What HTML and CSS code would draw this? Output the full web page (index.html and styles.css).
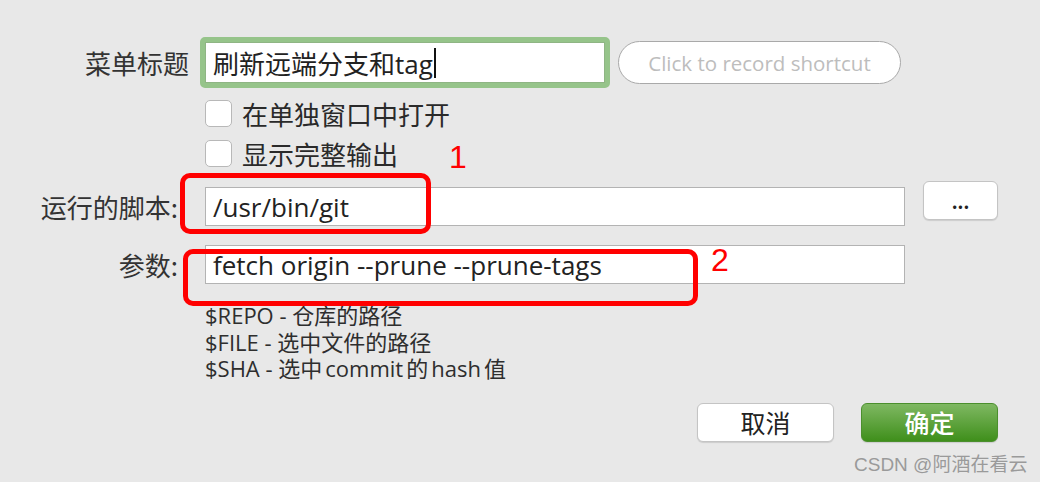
FILE: index.html
```html
<!DOCTYPE html>
<html lang="zh-CN">
<head>
  <meta charset="UTF-8">
  <title>自定义操作</title>
  <link rel="stylesheet" href="styles.css">
</head>
<body>
  <div class="sheet">
    <div class="row title-row">
      <label class="lbl">菜单标题</label>
      <div class="focus-ring"><div class="field title-field">刷新远端分支和tag<span class="caret"></span></div></div>
      <div class="shortcut">Click to record shortcut</div>
    </div>

    <div class="row check-row first">
      <span class="box"></span><span class="check-text">在单独窗口中打开</span>
    </div>
    <div class="row check-row">
      <span class="box"></span><span class="check-text">显示完整输出</span>
    </div>

    <div class="row field-row script-row">
      <label class="lbl colon">运行的脚本:</label>
      <div class="field wide">/usr/bin/git</div>
      <button class="btn browse">...</button>
    </div>

    <div class="row field-row args-row">
      <label class="lbl colon">参数:</label>
      <div class="field wide">fetch origin --prune --prune-tags</div>
    </div>

    <div class="help">
      <div>$REPO - 仓库的路径</div>
      <div>$FILE - 选中文件的路径</div>
      <div>$SHA - 选中<span class="gap">commit</span>的<span class="gap">hash</span>值</div>
    </div>

    <div class="actions">
      <button class="btn cancel">取消</button>
      <button class="btn ok">确定</button>
    </div>

    <div class="mark mark-1"></div>
    <div class="mark mark-2"></div>
    <span class="num num-1">1</span>
    <span class="num num-2">2</span>
    <div class="watermark">CSDN @阿酒在看云</div>
  </div>
</body>
</html>
```

FILE: styles.css
```css
body { margin: 0; background: #e8e8e8; font-family: "Open Sans", "Noto Sans CJK SC", sans-serif; color: #222; }
.sheet { position: relative; width: 1040px; height: 482px; padding-top: 37px; box-sizing: border-box; }
.row { display: flex; align-items: center; }
.lbl { width: 190px; text-align: right; font-family: "Noto Sans CJK SC", sans-serif; font-size: 26px; color: #333; flex: none; box-sizing: border-box; padding-right: 1px; }
.lbl.colon { padding-right: 12px; }

.focus-ring { margin-left: 10px; width: 410px; height: 51px; box-sizing: border-box; border: 5px solid #96c48a; border-radius: 5px; background: #fff; }
.title-field { height: 100%; border: 1px solid #8fb584; box-sizing: border-box; font-size: 26px; padding-left: 7px; display: flex; align-items: center; }
.caret { display: inline-block; width: 2px; height: 30px; background: #111; margin-left: 1px; }
.shortcut { margin-left: 8px; width: 283px; height: 43px; box-sizing: border-box; border: 1px solid #a9a9a9; border-radius: 22px; background: #fff; color: #bdbdbd; font-size: 20.5px; display: flex; align-items: center; justify-content: center; }

.check-row { margin-left: 205px; height: 27px; }
.check-row.first { margin-top: 12px; }
.check-row + .check-row { margin-top: 13px; }
.box { width: 27px; height: 27px; box-sizing: border-box; border: 1px solid #b8b8b8; border-radius: 5px; background: #fff; }
.check-text { margin-left: 10px; font-family: "Noto Sans CJK SC", sans-serif; font-size: 26px; color: #2a2a2a; }

.field-row { height: 39px; align-items: center; }
.script-row { margin-top: 20px; }
.args-row { margin-top: 19px; }
.field { background: #fff; color: #222; }
.wide { margin-left: 15px; width: 700px; height: 39px; box-sizing: border-box; border: 1px solid #b3b3b3; font-size: 26px; padding-left: 7px; display: flex; align-items: center; }

.btn { font-family: "Noto Sans CJK SC", sans-serif; background: #fff; border: 1px solid #c4c4c4; border-radius: 6px; box-shadow: 0 1px 1px rgba(0,0,0,0.12); color: #222; padding: 0; }
.browse { margin-left: 18px; align-self: flex-start; margin-top: -6px; width: 75px; height: 39px; font-size: 18px; font-weight: bold; line-height: 1; }

.help { margin: 18px 0 0 205px; font-size: 22px; line-height: 26.5px; color: #2e2e2e; }
.gap { margin: 0 3px; }

.actions { display: flex; justify-content: flex-end; gap: 27px; margin: 21px 42px 0 0; }
.actions .btn { width: 137px; height: 39px; font-size: 25px; }
.ok { background: linear-gradient(#7fb862, #3f8f1b); border-color: #4b8f2d; color: #fff; font-weight: 500; }

.mark { position: absolute; border: 5px solid #ff0000; border-radius: 10px; box-sizing: border-box; }
.mark-1 { left: 180px; top: 173px; width: 251px; height: 61px; }
.mark-2 { left: 183px; top: 249px; width: 515px; height: 57px; }
.num { position: absolute; color: #ff0000; font-family: "Liberation Sans", sans-serif; font-size: 32px; line-height: 1; }
.num-1 { left: 449px; top: 141px; }
.num-2 { left: 711px; top: 244px; }

.watermark { position: absolute; left: 854px; top: 449px; font-size: 19px; color: #9a9a9a; font-family: "Liberation Sans", "Noto Sans CJK SC", sans-serif; }
```
